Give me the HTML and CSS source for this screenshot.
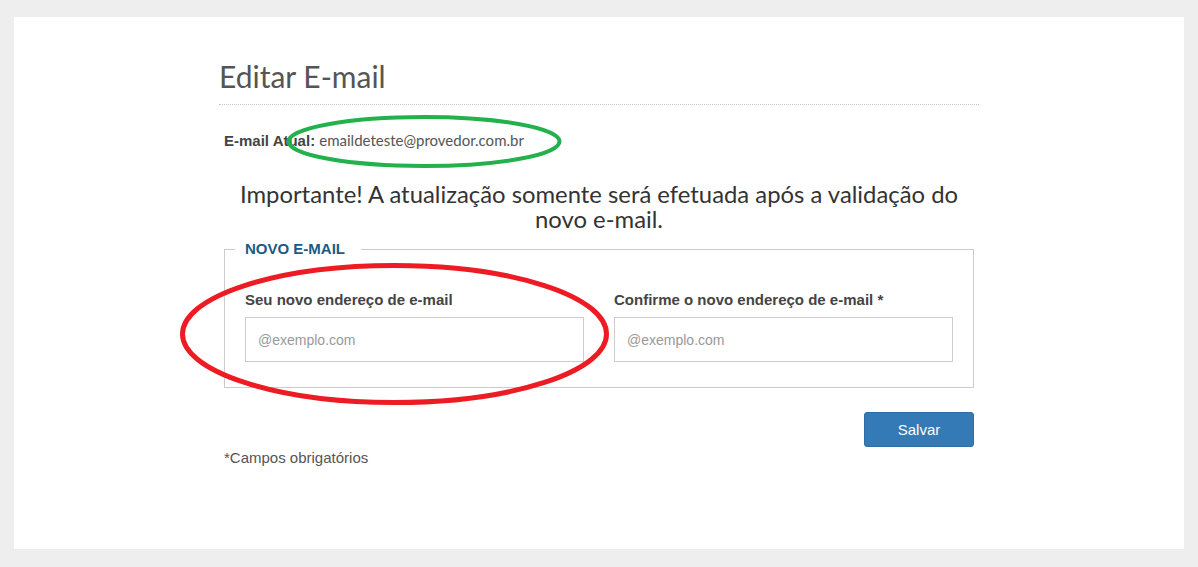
FILE: index.html
```html
<!DOCTYPE html>
<html lang="pt-BR">
<head>
<meta charset="utf-8">
<title>Editar E-mail</title>
<link rel="stylesheet" href="styles.css">
</head>
<body>
<div class="panel">
  <div class="container">
    <h1 class="title">Editar E-mail</h1>
    <div class="content">
      <p class="current"><strong>E-mail Atual:</strong> <span class="current-value">emaildeteste@provedor.com.br</span></p>
      <p class="notice">Importante! A atualização somente será efetuada após a validação do novo e-mail.</p>
      <fieldset class="box">
        <legend class="box-legend">NOVO E-MAIL</legend>
        <div class="fields">
          <div class="field">
            <label class="field-label" for="novo">Seu novo endereço de e-mail</label>
            <input class="field-input" id="novo" type="email" placeholder="@exemplo.com">
          </div>
          <div class="field">
            <label class="field-label" for="confirma">Confirme o novo endereço de e-mail *</label>
            <input class="field-input" id="confirma" type="email" placeholder="@exemplo.com">
          </div>
        </div>
      </fieldset>
      <div class="actions">
        <button class="btn-save" type="button">Salvar</button>
      </div>
      <p class="required">*Campos obrigatórios</p>
    </div>
  </div>
</div>
<svg class="annotations" width="1198" height="567" viewBox="0 0 1198 567" aria-hidden="true">
  <ellipse cx="424" cy="141.5" rx="135.5" ry="24.5" fill="none" stroke="#22b14c" stroke-width="4"/>
  <ellipse cx="394.5" cy="334" rx="212" ry="68.5" fill="none" stroke="#ed1c24" stroke-width="5"/>
</svg>
</body>
</html>
```
FILE: styles.css
```css
html, body {
  margin: 0;
  padding: 0;
}
body {
  background: #eeeeee;
  font-family: "Liberation Sans", Arial, sans-serif;
  font-size: 15px;
  color: #555;
  position: relative;
  min-height: 567px;
}
.panel {
  background: #fff;
  margin: 17px 14px 0;
  height: 532px;
  overflow: hidden;
}
.container {
  width: 760px;
  margin: 0 auto;
  padding-top: 43px;
}
.title {
  margin: 0;
  font-family: Lato, "Liberation Sans", sans-serif;
  font-weight: 400;
  font-size: 30px;
  line-height: 33px;
  color: #555;
  padding-bottom: 11px;
  border-bottom: 1px dotted #c8c8c8;
}
.content {
  padding: 0 5px;
}
.current {
  margin: 25px 0 0;
  line-height: 20px;
  font-size: 15px;
}
.current strong {
  color: #444;
  font-weight: 700;
}
.current-value {
  font-family: Lato, "Liberation Sans", sans-serif;
  color: #555;
}
.notice {
  margin: 30px 0 0;
  text-align: center;
  font-family: Lato, "Liberation Sans", sans-serif;
  font-size: 23.85px;
  line-height: 25px;
  color: #333;
  padding: 0 10px;
}
.box {
  margin: 8px 0 0;
  border: 1px solid #cccccc;
  padding: 31px 20px 25px;
  min-width: 0;
}
.box-legend {
  margin-left: -10px;
  padding: 0 16px 0 10px;
  font-weight: 700;
  font-size: 15px;
  line-height: 20px;
  color: #1b5a87;
}
.fields {
  display: grid;
  grid-template-columns: 1fr 1fr;
  column-gap: 30px;
}
.field {
  display: flex;
  flex-direction: column;
}
.field-label {
  font-weight: 700;
  font-size: 15px;
  line-height: 20px;
  color: #444;
  margin-bottom: 7px;
}
.field-input {
  box-sizing: border-box;
  height: 45px;
  width: 100%;
  border: 1px solid #cccccc;
  padding: 0 12px;
  font-family: "Liberation Sans", Arial, sans-serif;
  font-size: 14px;
  color: #555;
  background: #fff;
  outline: none;
}
.field-input::placeholder {
  color: #999;
}
.actions {
  display: flex;
  justify-content: flex-end;
  margin-top: 24px;
}
.btn-save {
  width: 110px;
  height: 35px;
  background: #337ab7;
  border: 1px solid #2e6da4;
  border-radius: 3px;
  color: #fff;
  font-family: "Liberation Sans", Arial, sans-serif;
  font-size: 15px;
  padding: 0;
}
.required {
  margin: 1px 0 0;
  line-height: 20px;
  font-size: 15px;
  color: #555;
}
.annotations {
  position: absolute;
  left: 0;
  top: 0;
  pointer-events: none;
}
```
